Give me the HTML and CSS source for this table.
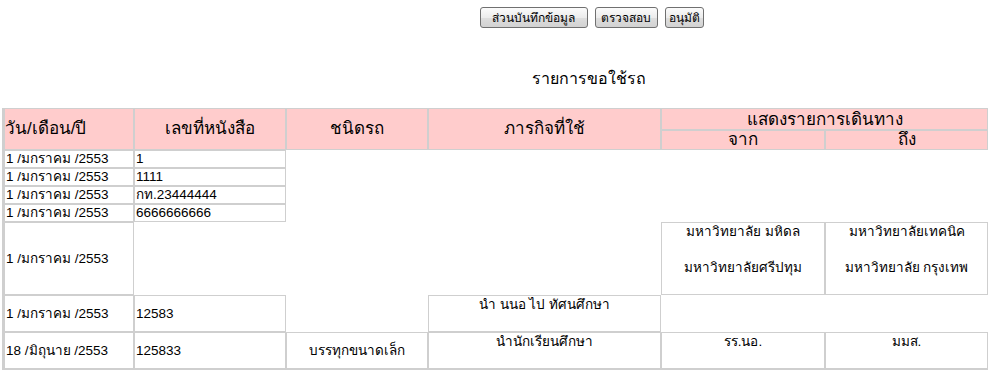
FILE: index.html
```html
<!DOCTYPE html>
<html>
    <head>
        <meta charset="utf-8">
        <title> รายการขอใช้รถ </title>
        <link rel="stylesheet" href="styles.css">
    </head>

    <body>

        <!-- ปุ่มเมนูด้านบน -->
        <div class="toolbar">
            <button class="topButton saveButton"> ส่วนบันทึกข้อมูล </button>
            <button class="topButton checkButton"> ตรวจสอบ </button>
            <button class="topButton approveButton"> อนุมัติ </button>
        </div>

        <p class="title"> รายการขอใช้รถ </p>

        <!-- ตารางรายการขอใช้รถ -->
        <table class="carList">
            <colgroup>
                <col class="colDate">
                <col class="colDoc">
                <col class="colCar">
                <col class="colJob">
                <col class="colFrom">
                <col class="colTo">
            </colgroup>
            <tr>
                <th rowspan="2" class="leftHead">วัน/เดือน/ปี</th>
                <th rowspan="2">เลขที่หนังสือ</th>
                <th rowspan="2">ชนิดรถ</th>
                <th rowspan="2">ภารกิจที่ใช้</th>
                <th colspan="2" class="groupHead">แสดงรายการเดินทาง</th>
            </tr>
            <tr>
                <th>จาก</th>
                <th>ถึง</th>
            </tr>

            <tr class="shortRow">
                <td>1 /มกราคม /2553</td>
                <td>1</td>
                <td class="car"></td>
                <td class="trip"></td>
                <td class="trip"></td>
                <td class="trip"></td>
            </tr>
            <tr class="shortRow">
                <td>1 /มกราคม /2553</td>
                <td>1111</td>
                <td class="car"></td>
                <td class="trip"></td>
                <td class="trip"></td>
                <td class="trip"></td>
            </tr>
            <tr class="shortRow">
                <td>1 /มกราคม /2553</td>
                <td>กท.23444444</td>
                <td class="car"></td>
                <td class="trip"></td>
                <td class="trip"></td>
                <td class="trip"></td>
            </tr>
            <tr class="shortRow">
                <td>1 /มกราคม /2553</td>
                <td>6666666666</td>
                <td class="car"></td>
                <td class="trip"></td>
                <td class="trip"></td>
                <td class="trip"></td>
            </tr>
            <tr>
                <td>1 /มกราคม /2553</td>
                <td></td>
                <td class="car"></td>
                <td class="trip"></td>
                <td class="trip">มหาวิทยาลัย มหิดล<br><br>มหาวิทยาลัยศรีปทุม</td>
                <td class="trip">มหาวิทยาลัยเทคนิค<br><br>มหาวิทยาลัย กรุงเทพ</td>
            </tr>
            <tr>
                <td>1 /มกราคม /2553</td>
                <td>12583</td>
                <td class="car"></td>
                <td class="trip">นำ นนอ ไป ทัศนศึกษา</td>
                <td class="trip"></td>
                <td class="trip"></td>
            </tr>
            <tr>
                <td>18 /มิถุนาย /2553</td>
                <td>125833</td>
                <td class="car">บรรทุกขนาดเล็ก</td>
                <td class="trip">นำนักเรียนศึกษา</td>
                <td class="trip">รร.นอ.</td>
                <td class="trip">มมส.</td>
            </tr>
        </table>

    </body>
</html>
```

FILE: styles.css
```css
 body{
     margin: 0;
     background: white;
     color: black;
     font-family: Tahoma, "Liberation Sans", sans-serif;
     font-size: 13px;
 }

 /* ปุ่มด้านบน */

 .toolbar{
     display: flex;
     justify-content: center;
     gap: 7px;
     padding: 7px 0 0 194px;
 }

 .topButton{
     height: 21px;
     padding: 0;
     font-family: Tahoma, "Liberation Sans", sans-serif;
     font-size: 12px;
     color: black;
     border: 1px solid #707070;
     border-radius: 3px;
     background: linear-gradient(#fbfbfb, #ececec 50%, #dedede 51%, #d2d2d2);
 }
 .saveButton{
     width: 108px;
 }
 .checkButton{
     width: 63px;
 }
 .approveButton{
     width: 39px;
 }

 .title{
     margin: 41px 0 19px;
     padding-left: 188px;
     text-align: center;
     font-size: 16px;
     line-height: 20px;
 }

 /* ตาราง */

 .carList{
     width: 986px;
     margin-left: 2px;
     table-layout: fixed;
     border-collapse: separate;
     border-spacing: 0;
     empty-cells: hide;
     border-left: 2px solid #cfcfcf;
     border-bottom: 2px solid #cfcfcf;
 }

 .colDate{ width: 130px; }
 .colDoc{ width: 152px; }
 .colCar{ width: 142px; }
 .colJob{ width: 233px; }
 .colFrom{ width: 164px; }
 .colTo{ width: 163px; }

 .carList th{
     background-color: #ffcccc;
     border: 1px solid #cfcfcf;
     padding: 0;
     font-size: 17px;
     font-weight: normal;
     line-height: 18px;
     text-align: center;
 }
 .carList th.leftHead{
     text-align: left;
 }
 .carList th.groupHead{
     padding-top: 2px;
 }

 .carList td{
     border: 1px solid #cfcfcf;
     padding: 0 1px;
     font-size: 13.5px;
     line-height: 16px;
     vertical-align: middle;
     white-space: nowrap;
     overflow: hidden;
 }
 .carList td.car{
     text-align: center;
 }
 .carList td.trip{
     text-align: center;
     vertical-align: top;
     line-height: 18px;
     padding-bottom: 17px;
 }
 .shortRow td.trip{
     padding-bottom: 0;
 }
```
